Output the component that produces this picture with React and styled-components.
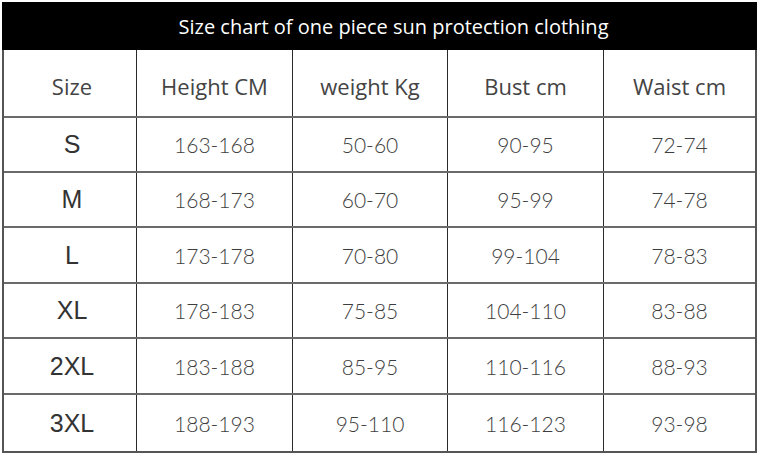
import styled, { createGlobalStyle } from 'styled-components';

const GlobalStyle = createGlobalStyle`
  html, body {
    margin: 0;
    padding: 0;
    background: #fff;
  }
`;

const Chart = styled.div`
  margin: 2px 0 0 2px;
  width: 755px;
  border: 2px solid #555;
  border-top: none;
  box-sizing: border-box;
`;

const Title = styled.div`
  height: 48px;
  background: #000;
  color: #fff;
  font-family: "Open Sans", sans-serif;
  font-size: 20px;
  display: flex;
  align-items: center;
  justify-content: center;
  padding-left: 28px;
  margin: 0 -2px;
`;

const Row = styled.div`
  display: grid;
  grid-template-columns: 132px 156px 155px 156px 1fr;
  height: ${(p) => p.$h}px;
  border-top: ${(p) => (p.$first ? 'none' : '2px solid #6a6a6a')};
  box-sizing: border-box;
`;

const Cell = styled.div`
  display: flex;
  align-items: center;
  justify-content: center;
  border-left: ${(p) => (p.$first ? 'none' : '1.5px solid #2a2a2a')};
  padding-left: ${(p) => (p.$first ? '4px' : '0')};
  color: #3e3e3e;
  font-family: "Lato", sans-serif;
  font-weight: 300;
  font-size: 21px;
`;

const HeadCell = styled(Cell)`
  font-family: "Open Sans", sans-serif;
  font-weight: 400;
  font-size: 22px;
  color: #444;
  padding-top: 6px;
`;

const SizeCell = styled(Cell)`
  font-family: "Liberation Sans", Arial, sans-serif;
  font-weight: 400;
  font-size: 25px;
  color: #333;
`;

const headers = ['Size', 'Height CM', 'weight Kg', 'Bust cm', 'Waist cm'];

const rows = [
  ['S', '163-168', '50-60', '90-95', '72-74'],
  ['M', '168-173', '60-70', '95-99', '74-78'],
  ['L', '173-178', '70-80', '99-104', '78-83'],
  ['XL', '178-183', '75-85', '104-110', '83-88'],
  ['2XL', '183-188', '85-95', '110-116', '88-93'],
  ['3XL', '188-193', '95-110', '116-123', '93-98'],
];

const heights = [55, 55, 56, 55, 56, 58];

export default function App() {
  return (
    <>
      <GlobalStyle />
      <Chart>
        <Title>Size chart of one piece sun protection clothing</Title>
        <Row $h={66} $first>
          {headers.map((h, i) => (
            <HeadCell key={h} $first={i === 0}>{h}</HeadCell>
          ))}
        </Row>
        {rows.map((r, ri) => (
          <Row key={r[0]} $h={heights[ri]}>
            <SizeCell $first>{r[0]}</SizeCell>
            {r.slice(1).map((v, i) => (
              <Cell key={i}>{v}</Cell>
            ))}
          </Row>
        ))}
      </Chart>
    </>
  );
}
